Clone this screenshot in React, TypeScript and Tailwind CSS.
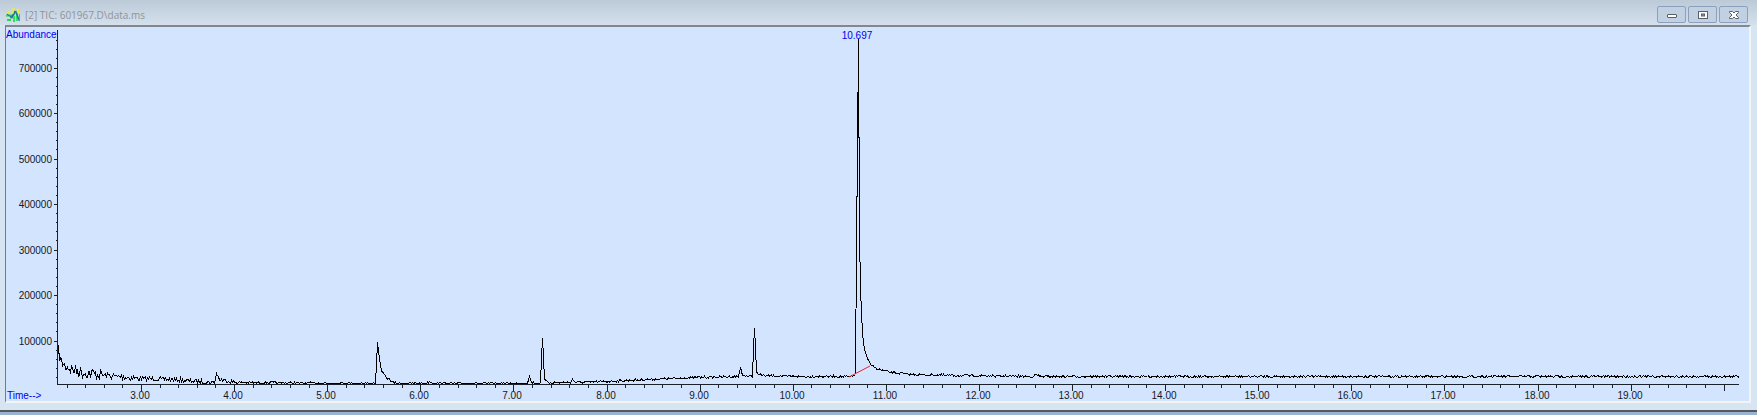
import type { ReactNode } from "react";

type Point = [number, number];

const PLOT = { width: 1743, height: 374, left: 50, right: 1732, axisY: 357 };

const timeToX = (t: number) => Math.round(134 + (t - 3) * 93.1);
const abundanceToY = (v: number) => Math.round(359 - v * 0.000455);

const majorTimes = Array.from({ length: 17 }, (_, i) => i + 3);
const timeTicks = Array.from({ length: 90 }, (_, i) => (i + 11) / 5);
const majorAbundances = [700000, 600000, 500000, 400000, 300000, 200000, 100000];
const abundanceTicks = Array.from({ length: 38 }, (_, i) => (i + 1) * 20000);

// x, y of the smoothed signal
const baseline: Point[] = [
  [51, 324], [53, 333], [57, 338], [65, 342], [75, 345], [91, 347], [109, 349],
  [134, 351], [164, 352], [204, 355], [207, 355], [209, 346], [212, 352], [229, 355],
  [368, 356], [369, 336], [370, 315], [372, 331], [374, 344], [379, 350], [386, 355],
  [391, 356], [419, 356], [422, 354], [425, 356], [520, 356], [522, 349], [524, 355],
  [533, 356], [534, 330], [535, 311], [536, 330], [537, 352], [540, 355],
  [563, 355], [565, 352], [568, 355], [599, 354], [639, 352], [689, 350], [731, 349],
  [733, 340], [735, 348], [745, 349], [746, 320], [747, 301], [748, 320],
  [749, 345], [755, 348], [789, 349], [845, 349], [848, 347], [849, 220], [850, 120],
  [851, 12], [852, 206], [853, 262], [855, 306], [857, 322], [860, 331], [864, 338],
  [871, 342], [884, 345], [904, 347], [949, 348], [1025, 349], [1029, 347], [1033, 349],
  [1199, 349], [1732, 349],
];

const noiseLevel = (x: number) => {
  if (x < 95) return 6;
  if (x < 134) return 3;
  if (x < 229) return 2;
  if (x > 846 && x < 865) return 0;
  return 1;
};

const buildTrace = () => {
  let seed = 7;
  const random = () => {
    seed = (seed * 16807) % 2147483647;
    return seed / 2147483647;
  };

  const points: string[] = [];
  let segment = 0;
  for (let x = PLOT.left + 1; x <= PLOT.right; x++) {
    while (segment < baseline.length - 2 && baseline[segment + 1][0] < x) segment++;
    const [x0, y0] = baseline[segment];
    const [x1, y1] = baseline[segment + 1];
    const y = y0 + ((y1 - y0) * (x - x0)) / (x1 - x0);
    const steep = Math.abs((y1 - y0) / (x1 - x0)) > 3 && x > 62;
    const noise = steep ? 0 : (random() * 2 - 1) * noiseLevel(x);
    points.push(`${x + 0.5},${(Math.min(y + noise, 356) + 0.5).toFixed(1)}`);
  }
  return points.join(" ");
};

const trace = buildTrace();

const WindowButton = ({ label, children }: { label: string; children: ReactNode }) => (
  <button
    type="button"
    aria-label={label}
    className="flex h-[17px] w-[29px] items-center justify-center rounded-xs border border-[#8c9fbe] bg-[#c2d1e1]"
  >
    <svg viewBox="0 0 12 10" className="h-[10px] w-3" fill="none">
      {children}
    </svg>
  </button>
);

const AppIcon = () => (
  <svg viewBox="0 0 15 14" className="h-[14px] w-[15px]" fill="none">
    <path d="M1 5l3-2M7.5 0v5M11 1l2 2" stroke="#f5ef1e" strokeWidth="2" />
    <path d="M0 7.5h5v3M1 12h4" stroke="#25d850" strokeWidth="2" />
    <path d="M1 6l4 3" stroke="#1f5fc0" />
    <path d="M5.5 10L9.5 3" stroke="#1c7c86" strokeWidth="2" />
    <path d="M8 8v6M11 5v8" stroke="#2fe65a" strokeWidth="2" />
    <path d="M9.5 3l4 10" stroke="#187f8c" strokeWidth="1.5" />
    <path d="M13.5 6v7" stroke="#27c95a" />
    <path d="M5 5h3M11 4.5h3" stroke="#dff04b" />
  </svg>
);

const Chromatogram = () => (
  <svg
    viewBox={`-1 0 ${PLOT.width} ${PLOT.height}`}
    className="block h-auto w-full font-['Liberation_Sans',Arial,sans-serif] text-[10px]"
    role="img"
    aria-label="Abundance, Time"
  >
    <g shapeRendering="crispEdges" stroke="#1c222c" fill="none">
      <path d={`M${PLOT.left + 0.5} 3V${PLOT.axisY + 1}`} />
      <path d={`M${PLOT.left} ${PLOT.axisY + 0.5}H${PLOT.right}`} />
      {abundanceTicks.map((v) => (
        <path key={v} d={`M${v % 100000 === 0 ? 47 : 49} ${abundanceToY(v) + 0.5}H${PLOT.left}`} />
      ))}
      {timeTicks.map((t) => (
        <path key={t} d={`M${timeToX(t) + 0.5} ${PLOT.axisY}v${Number.isInteger(t) ? 7 : 4}`} />
      ))}
    </g>

    <g fill="#14181f" textAnchor="end">
      {majorAbundances.map((v) => (
        <text key={v} x="45" y={abundanceToY(v) + 4}>{v}</text>
      ))}
    </g>
    <g fill="#14181f" textAnchor="middle">
      {majorTimes.map((t) => (
        <text key={t} x={timeToX(t) - 1} y="372">{t.toFixed(2)}</text>
      ))}
    </g>

    <polyline points={trace} fill="none" stroke="#000" shapeRendering="crispEdges" />
    <path d="M842 350L863 339" stroke="#f02030" fill="none" />

    <g fill="#0000f0">
      <text x="-1" y="11">Abundance</text>
      <text x="0" y="372">Time--&gt;</text>
      <text x="850" y="12" textAnchor="middle">10.697</text>
    </g>
  </svg>
);

export default function App() {
  return (
    <div className="bg-[#9ab3d0] pb-[3px]">
      <main className="border-b-2 border-[#55585e] bg-[#d7e4f1] pb-[7px]">
        <header className="flex h-[25px] items-center justify-between bg-linear-to-b from-[#bccad8] to-[#d4e0ec] pt-1 pr-[9px] pl-[6px]">
          <div className="flex items-center gap-1">
            <AppIcon />
            <h1 className="font-['Open_Sans',sans-serif] text-[10px] leading-4 text-[#8f949b]">
              [2] TIC: 601967.D\data.ms
            </h1>
          </div>
          <div className="flex gap-[2px]">
            <WindowButton label="Minimize">
              <rect x="1.5" y="4.5" width="9" height="3" rx="0.5" fill="#fff" stroke="#5b5f68" />
            </WindowButton>
            <WindowButton label="Maximize">
              <rect x="1.5" y="1.5" width="9" height="7" fill="#fff" stroke="#5b5f68" />
              <rect x="4.5" y="4" width="3" height="2" fill="#8d9cb0" stroke="#5b5f68" />
            </WindowButton>
            <WindowButton label="Close">
              <path
                d="M1.5 1.5h3L6 3l1.5-1.5h3v1L8 5l2.5 2.5v1h-3L6 7 4.5 8.5h-3v-1L4 5 1.5 2.5z"
                fill="#fff"
                stroke="#5b5f68"
              />
            </WindowButton>
          </div>
        </header>
        <section className="mr-[6px] ml-[5px] border-2 border-l border-t-[#83878e] border-r-[#f2f4f6] border-b-[#f2f4f6] border-l-[#777b82] bg-[#d3e4ff]">
          <Chromatogram />
        </section>
      </main>
    </div>
  );
}
